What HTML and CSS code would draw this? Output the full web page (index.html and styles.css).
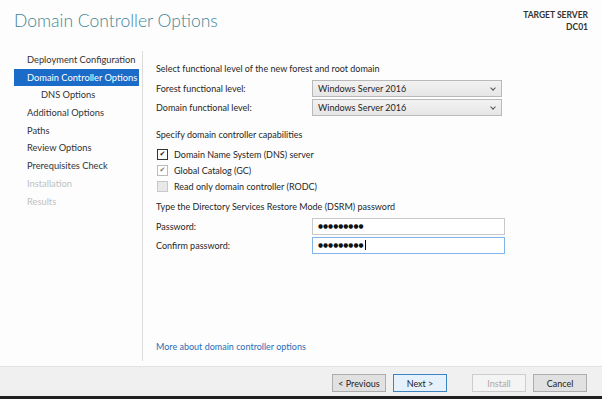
FILE: index.html
```html
<!DOCTYPE html>
<html lang="en">
<head>
    <meta charset="UTF-8">
    <title>Domain Controller Options</title>
    <link rel="stylesheet" href="styles.css">
</head>
<body>
    <div class="wizard">
        <div class="header">
            <h1>Domain Controller Options</h1>
            <div class="target">
                <div>TARGET SERVER</div>
                <div>DC01</div>
            </div>
        </div>

        <div class="main">
            <ul class="nav">
                <li>Deployment Configuration</li>
                <li class="active">Domain Controller Options</li>
                <li class="sub">DNS Options</li>
                <li>Additional Options</li>
                <li>Paths</li>
                <li>Review Options</li>
                <li>Prerequisites Check</li>
                <li class="off">Installation</li>
                <li class="off">Results</li>
            </ul>

            <div class="content">
                <p class="section">Select functional level of the new forest and root domain</p>
                <div class="rows">
                    <div class="row">
                        <label>Forest functional level:</label>
                        <div class="select">Windows Server 2016<span class="chev"></span></div>
                    </div>
                    <div class="row">
                        <label>Domain functional level:</label>
                        <div class="select">Windows Server 2016<span class="chev"></span></div>
                    </div>
                </div>

                <p class="section gap-lg">Specify domain controller capabilities</p>
                <div class="checks">
                    <div class="check"><span class="box checked">&#10004;</span>Domain Name System (DNS) server</div>
                    <div class="check"><span class="box checked dim">&#10004;</span>Global Catalog (GC)</div>
                    <div class="check"><span class="box empty"></span>Read only domain controller (RODC)</div>
                </div>

                <p class="section gap-md">Type the Directory Services Restore Mode (DSRM) password</p>
                <div class="rows">
                    <div class="row">
                        <label>Password:</label>
                        <div class="input">&#9679;&#9679;&#9679;&#9679;&#9679;&#9679;&#9679;&#9679;&#9679;</div>
                    </div>
                    <div class="row">
                        <label>Confirm password:</label>
                        <div class="input focus">&#9679;&#9679;&#9679;&#9679;&#9679;&#9679;&#9679;&#9679;&#9679;<span class="caret"></span></div>
                    </div>
                </div>

                <a class="more" href="#">More about domain controller options</a>
            </div>
        </div>

        <div class="footer">
            <button class="btn">&lt; Previous</button>
            <button class="btn primary">Next &gt;</button>
            <button class="btn disabled install">Install</button>
            <button class="btn">Cancel</button>
        </div>
    </div>
</body>
</html>
```

FILE: styles.css
```css
body {
    margin: 0;
    font-family: Lato, "Open Sans", sans-serif;
    font-size: 9px;
    color: #262626;
    background: #fdfdfd;
}

.wizard {
    width: 602px;
    height: 399px;
    display: flex;
    flex-direction: column;
    border-bottom: 3px solid #1f1f1f;
    box-sizing: border-box;
}

.header {
    height: 51px;
    display: flex;
    justify-content: space-between;
    padding: 0 14px;
}

h1 {
    margin: 10px 0 0 0;
    font-size: 17.5px;
    font-weight: 300;
    color: #3f8597;
}

.target {
    margin-top: 9px;
    text-align: right;
    font-size: 8.5px;
    font-weight: 700;
    line-height: 12px;
    color: #333;
}

.main {
    flex: 1;
    display: flex;
}

.nav {
    list-style: none;
    margin: 0 0 5px 0;
    padding: 0 3px 0 14px;
    width: 125px;
    border-right: 1px solid #dcdcdc;
    font-size: 9.3px;
}

.nav li {
    height: 17.7px;
    line-height: 17.7px;
    padding-left: 13px;
    color: #333;
    white-space: nowrap;
}

.nav li.active {
    background: #1b6cc8;
    color: #fff;
}

.nav li.sub {
    padding-left: 27px;
}

.nav li.off {
    color: #c0c0c0;
}

.content {
    flex: 1;
    display: flex;
    flex-direction: column;
    padding: 11px 0 12px 13px;
}

.section {
    margin: 0;
    line-height: 14px;
}

.gap-lg {
    margin-top: 12px;
}

.gap-md {
    margin-top: 6px;
}

.rows {
    display: flex;
    flex-direction: column;
    gap: 2px;
    margin-top: 4px;
}

.row {
    display: flex;
    align-items: center;
    height: 17px;
}

.row label {
    width: 156px;
}

.select, .input {
    width: 190px;
    height: 17px;
    box-sizing: border-box;
    padding-left: 5px;
    line-height: 15px;
    position: relative;
}

.select {
    border: 1px solid #b9b9b9;
    background: linear-gradient(#f2f2f2, #e6e6e6);
}

.chev {
    position: absolute;
    right: 6px;
    top: 5px;
    width: 3px;
    height: 3px;
    border-right: 1px solid #555;
    border-bottom: 1px solid #555;
    transform: rotate(45deg);
}

.input {
    width: 193px;
    border: 1px solid #c8c8c8;
    background: #fff;
    font-family: "DejaVu Sans", sans-serif;
    font-size: 5.8px;
    letter-spacing: 0;
    color: #111;
}

.input.focus {
    border-color: #7eb4ea;
}

.caret {
    display: inline-block;
    width: 1px;
    height: 10px;
    margin-left: 1px;
    background: #000;
    vertical-align: middle;
}

.checks {
    margin-top: 4px;
}

.check {
    display: flex;
    align-items: center;
    height: 16px;
}

.box {
    width: 9px;
    height: 9px;
    margin: 0 6px 0 1px;
    border: 1px solid #333;
    background: #fff;
    font-family: "DejaVu Sans", sans-serif;
    font-size: 7px;
    line-height: 9px;
    text-align: center;
    color: #222;
}

.box.dim {
    border-color: #bbb;
    color: #777;
}

.box.empty {
    border-color: #c8c8c8;
    background: #e8e8e8;
}

.more {
    margin-top: auto;
    color: #2a6bb5;
    text-decoration: none;
    line-height: 14px;
}

.footer {
    height: 30px;
    border-top: 1px solid #e2e2e2;
    background: #f0f0f0;
    display: flex;
    justify-content: flex-end;
    align-items: flex-start;
    gap: 7px;
    padding: 7px 15px 0 0;
    box-sizing: border-box;
}

.btn {
    width: 54px;
    height: 18px;
    padding: 0;
    border: 1px solid #adadad;
    background: #e1e1e1;
    font-family: inherit;
    font-size: 9px;
    color: #222;
}

.btn.primary {
    border-color: #3c84c2;
    background: #e5f1fb;
}

.btn.disabled {
    border-color: #cdcdcd;
    background: #f4f4f4;
    color: #a8a8a8;
}

.install {
    margin-left: 18px;
}
```
